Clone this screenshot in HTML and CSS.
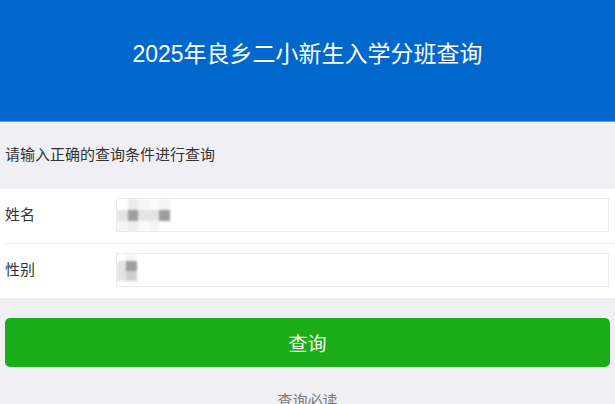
FILE: index.html
```html
<!DOCTYPE html>
<html lang="zh-CN">
<head>
<meta charset="utf-8">
<title>2025年良乡二小新生入学分班查询</title>
<link rel="stylesheet" href="styles.css">
</head>
<body>
<header class="top">
  <h1 class="title">2025年良乡二小新生入学分班查询</h1>
</header>
<p class="hint">请输入正确的查询条件进行查询</p>
<section class="form">
  <div class="row">
    <label class="label">姓名</label>
    <div class="input">
      <div class="mosaic mosaic-name">
        <span class="c w"></span><span class="c l2"></span><span class="c l4"></span><span class="c l5"></span><span class="c l4"></span>
        <span class="c l1"></span><span class="c d"></span><span class="c l1"></span><span class="c l1"></span><span class="c d"></span>
        <span class="c l4"></span><span class="c l3"></span><span class="c l5"></span><span class="c l4"></span><span class="c w"></span>
      </div>
    </div>
  </div>
  <div class="row row-sep">
    <label class="label">性别</label>
    <div class="input">
      <div class="mosaic mosaic-sex">
        <span class="c w"></span><span class="c l4"></span>
        <span class="c l1"></span><span class="c d"></span>
        <span class="c l1"></span><span class="c m"></span>
      </div>
    </div>
  </div>
</section>
<div class="actions">
  <button class="btn" type="button">查询</button>
</div>
<p class="notice">查询必读</p>
</body>
</html>
```
FILE: styles.css
```css
html, body {
  margin: 0;
  padding: 0;
}
body {
  background: #efeff4;
  font-family: "Liberation Sans", "Noto Sans CJK SC", sans-serif;
  color: #333;
  overflow: hidden;
}
.top {
  background: #0067cd;
  height: 122px;
  box-sizing: border-box;
  padding-top: 38px;
  border-bottom: 1px solid #5aa3e6;
}
.title {
  margin: 0;
  text-align: center;
  color: #fff;
  font-size: 23px;
  font-weight: normal;
  line-height: 32px;
}
.hint {
  margin: 0;
  padding: 23px 5px 24px;
  font-size: 15px;
  line-height: 20px;
  color: #333;
}
.form {
  background: #fff;
}
.row {
  display: flex;
  align-items: flex-start;
  margin-left: 5px;
  padding: 9px 6px 11px 0;
}
.row-sep {
  border-top: 1px solid #f0f0f0;
}
.label {
  width: 111px;
  flex: none;
  font-size: 15px;
  line-height: 34px;
  color: #333;
}
.input {
  flex: 1;
  height: 34px;
  box-sizing: border-box;
  border: 1px solid #ebebeb;
  background: #fff;
  overflow: hidden;
}
.mosaic {
  display: grid;
  grid-template-columns: repeat(5, 10.5px);
  grid-auto-rows: 11px;
  filter: blur(0.8px);
  margin-top: 0;
}
.mosaic-sex {
  grid-template-columns: 9px 10.5px;
  grid-auto-rows: 7px 10px 10px;
}
.c { display: block; }
.w { background: #fff; }
.l5 { background: #fafafa; }
.l4 { background: #f5f5f5; }
.l3 { background: #eeeeee; }
.l2 { background: #ebebeb; }
.l1 { background: #e4e4e4; }
.m { background: #cfcfcf; }
.d { background: #9e9e9e; }
.actions {
  padding: 20px 5px 0;
}
.btn {
  display: block;
  width: 100%;
  height: 49px;
  border: 0;
  border-radius: 5px;
  background: #1aad19;
  color: #fff;
  font-family: "Liberation Sans", "Noto Sans CJK SC", sans-serif;
  font-size: 19px;
  cursor: pointer;
}
.notice {
  margin: 0;
  padding-top: 24px;
  text-align: center;
  font-size: 15px;
  line-height: 20px;
  color: #777;
}
```
